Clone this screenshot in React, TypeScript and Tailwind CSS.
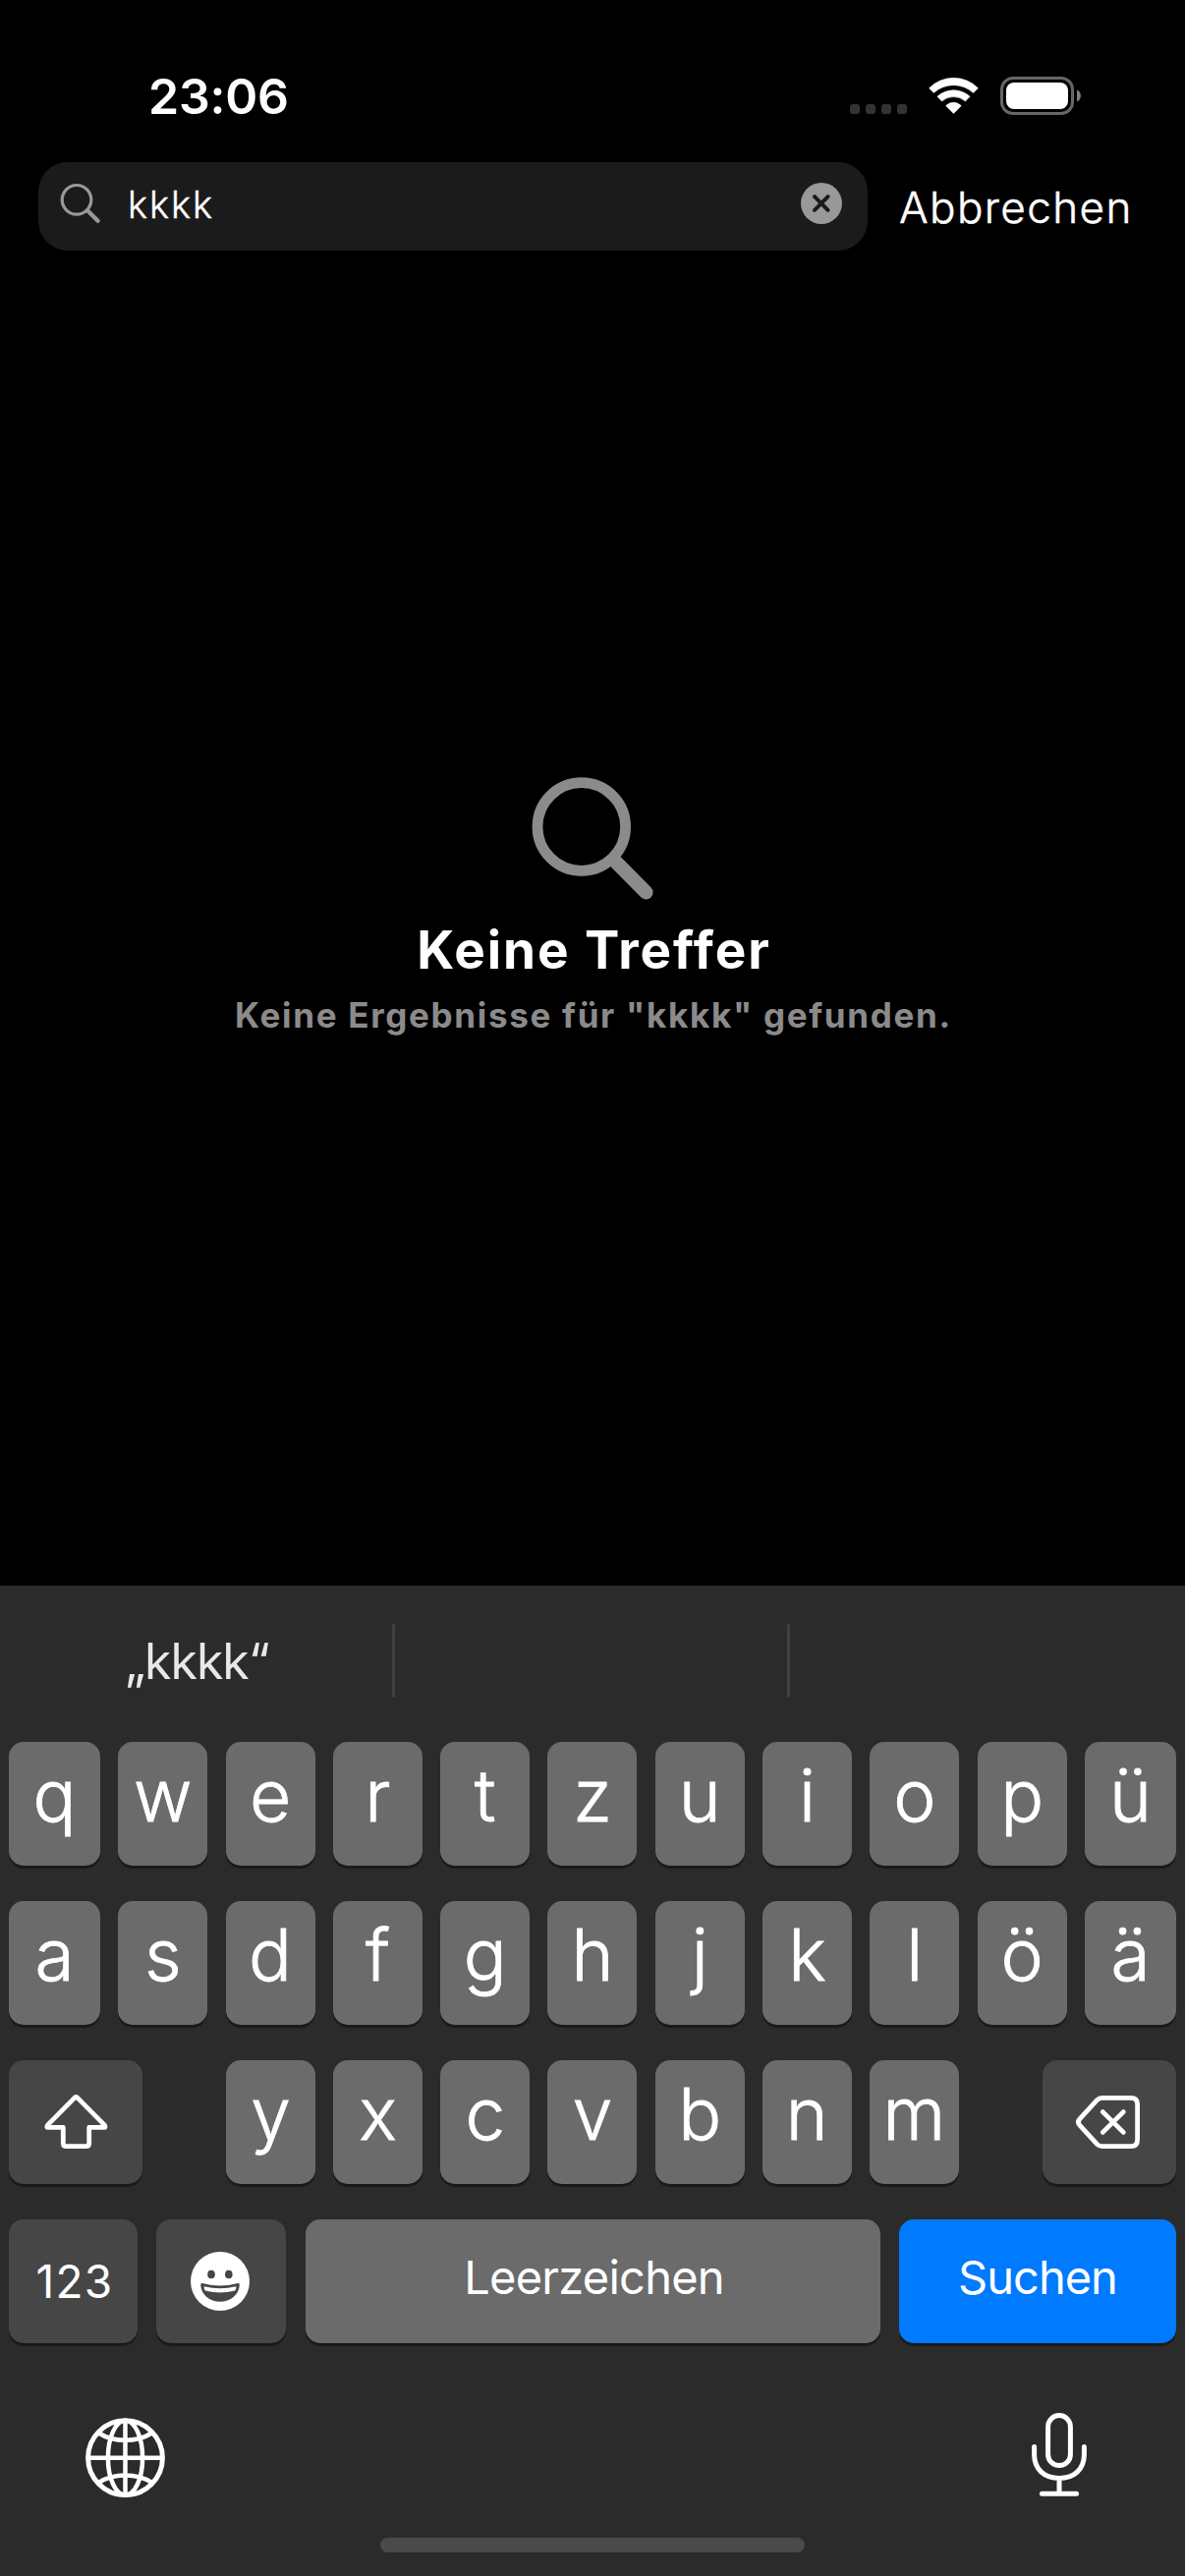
import type { ReactNode } from "react";

const rowOne = ["q", "w", "e", "r", "t", "z", "u", "i", "o", "p", "ü"];
const rowTwo = ["a", "s", "d", "f", "g", "h", "j", "k", "l", "ö", "ä"];
const rowThree = ["y", "x", "c", "v", "b", "n", "m"];

function Key({ dark, className, children }: { dark?: boolean; className: string; children: ReactNode }) {
  return (
    <div
      className={`flex h-[126px] shrink-0 items-start justify-center rounded-[15px] shadow-[0_3px_0_#1a1a1a] ${
        dark ? "bg-[#464646]" : "bg-[#6b6b6b]"
      } ${className}`}
    >
      {children}
    </div>
  );
}

function Letter({ char, wide }: { char: string; wide?: boolean }) {
  return (
    <Key className={wide ? "w-[93px]" : "w-[91px]"}>
      <span className="text-[73px] leading-[109px] font-light [-webkit-text-stroke:0.8px_white]">{char}</span>
    </Key>
  );
}

function LetterRow({ chars }: { chars: string[] }) {
  return (
    <div className="flex justify-between">
      {chars.map((c, i) => (
        <Letter key={c} char={c} wide={i === 0 || i === chars.length - 1} />
      ))}
    </div>
  );
}

function StatusBar() {
  return (
    <div className="flex h-[165px] items-start pl-[151px]">
      <span className="mt-[73px] text-[50px] leading-[50px] font-semibold tracking-[-0.2px]">23:06</span>
      <div className="mt-[78px] mr-[106px] ml-auto flex items-start">
        <div className="mt-[28px] flex gap-[6px]">
          {[0, 1, 2, 3].map((i) => (
            <div key={i} className="size-[10px] rounded-[3px] bg-[#333333]" />
          ))}
        </div>
        <svg className="mt-px ml-[22px]" width="51" height="38" viewBox="0 0 51 38" fill="#fff" stroke="#fff" strokeWidth="0.6" strokeLinejoin="round">
          <path d="M0.6 10.7A35 35 0 0 1 50.4 10.7L45.6 15.4A30 30 0 0 0 5.3 15.4Z" />
          <path d="M8.9 19.3A24.4 24.4 0 0 1 42.1 19.3L37.4 24A18.2 18.2 0 0 0 13.6 24Z" />
          <path d="M17.7 28.8A10.2 10.2 0 0 1 33.2 28.8L25.5 36.5Z" />
        </svg>
        <svg className="ml-[22px]" width="82" height="39" viewBox="0 0 82 39">
          <rect x="1.5" y="1.5" width="72" height="36" rx="11.5" fill="none" stroke="#666" strokeWidth="3" />
          <rect x="6" y="6" width="63" height="27" rx="8" fill="#fff" />
          <path d="M78 13.5C83.2 15.5 83.2 23.5 78 25.5Z" fill="#808080" />
        </svg>
      </div>
    </div>
  );
}

function SearchBar() {
  return (
    <div className="flex items-start pl-[39px]">
      <div className="flex h-[90px] w-[844px] items-start rounded-[30px] bg-[#1b1b1b] pl-[21px]">
        <svg className="mt-[20px]" width="44" height="44" viewBox="0 0 44 44" fill="none" stroke="#999" strokeLinecap="round">
          <circle cx="18" cy="18.3" r="14.8" strokeWidth="3.2" />
          <path d="M29 29.3L39.6 39.8" strokeWidth="4.4" />
        </svg>
        <span className="mt-[24px] ml-[26px] text-[38px] leading-[38px] font-light tracking-[1.9px] [-webkit-text-stroke:0.4px_white]">kkkk</span>
        <svg className="mt-[21px] mr-[26px] ml-auto" width="42" height="42" viewBox="0 0 42 42">
          <circle cx="21" cy="21" r="21" fill="#999" />
          <path d="M14 14.2L27.6 27.8M27.6 14.2L14 27.8" stroke="#1b1b1b" strokeWidth="4" strokeLinecap="round" />
        </svg>
      </div>
      <span className="mt-[24px] ml-[32px] text-[44px] leading-[44px] font-light tracking-[1.4px] [-webkit-text-stroke:0.5px_white]">
        Abbrechen
      </span>
    </div>
  );
}

function EmptyState() {
  return (
    <div className="flex flex-1 flex-col items-center pt-[535px]">
      <svg width="126" height="126" viewBox="0 0 126 126" fill="none" stroke="#8b8b8b" strokeLinecap="round">
        <circle cx="51.8" cy="51.5" r="44.8" strokeWidth="10.8" />
        <path d="M85 85.5L117.4 118.3" strokeWidth="14.4" />
      </svg>
      <h1 className="mt-[23px] pl-[3px] text-[53px] leading-[56px] font-bold tracking-[1.94px]">Keine Treffer</h1>
      <p className="mt-[18px] pl-[2px] text-[35px] leading-[40px] font-bold tracking-[1.68px] whitespace-nowrap text-[#8b8b8b]">
        Keine Ergebnisse für "kkkk" gefunden.
      </p>
    </div>
  );
}

function Keyboard() {
  return (
    <div className="h-[1008px] bg-[#2b2b2b]">
      <div className="flex h-[159px] items-start">
        <div className="w-[399px] pt-[52px] pl-[127px] text-[50px] leading-[50px] tracking-[-1px] text-[#e8e8e8]">„kkkk“</div>
        <div className="mt-[39px] h-[75px] w-[3px] rounded-full bg-[#404040]" />
        <div className="w-[399px]" />
        <div className="mt-[39px] h-[75px] w-[3px] rounded-full bg-[#404040]" />
      </div>
      <div className="flex flex-col gap-[36px] px-[9px]">
        <LetterRow chars={rowOne} />
        <LetterRow chars={rowTwo} />
        <div className="flex justify-between">
          <Key dark className="w-[136px]">
            <svg width="136" height="126" viewBox="0 0 136 126" fill="none" stroke="#fff" strokeWidth="4.8" strokeLinejoin="round">
              <path d="M66.6 38.6Q68.4 36.4 70.2 38.6L97 65.6Q99.4 68.4 96.4 68.4H81.7V84.6Q81.7 87.7 78.6 87.7H58.4Q55.3 87.7 55.3 84.6V68.4H40.4Q37.4 68.4 39.8 65.6Z" />
            </svg>
          </Key>
          <div className="flex w-[746px] justify-between">
            {rowThree.map((c) => (
              <Letter key={c} char={c} />
            ))}
          </div>
          <Key dark className="w-[136px]">
            <svg width="136" height="126" viewBox="0 0 136 126" fill="none" stroke="#fff" strokeWidth="4.8" strokeLinecap="round" strokeLinejoin="round">
              <path d="M60.5 38.4H90Q96.6 38.4 96.6 45V81Q96.6 87.6 90 87.6H60.5Q57.6 87.6 55.4 85.4L37.8 66.2Q35 63 37.8 59.8L55.4 40.6Q57.6 38.4 60.5 38.4Z" />
              <path d="M61.3 52.6L82.3 73.4M82.3 52.6L61.3 73.4" />
            </svg>
          </Key>
        </div>
        <div className="flex">
          <Key dark className="w-[131px] pl-[3px]">
            <span className="text-[46px] leading-[126px] tracking-[1.2px]">123</span>
          </Key>
          <Key dark className="ml-[19px] w-[132px]">
            <svg width="132" height="126" viewBox="0 0 132 126">
              <circle cx="65" cy="63" r="30" fill="#fff" />
              <ellipse cx="56" cy="56" rx="3.8" ry="4.3" fill="#464646" />
              <ellipse cx="73.8" cy="56" rx="3.8" ry="4.3" fill="#464646" />
              <path d="M47 65Q65 70 83 65Q85 64.6 84.8 67C84 76.5 76 83.8 65 83.8S46 76.5 45.2 67Q45 64.6 47 65Z" fill="#464646" />
              <path d="M48.8 68.3Q65 72.3 81.2 68.3Q81.8 70 80.3 72.5Q65 76.3 49.7 72.5Q48.2 70 48.8 68.3Z" fill="#fff" />
            </svg>
          </Key>
          <Key className="ml-[20px] w-[585px] pl-[2px]">
            <span className="text-[47px] leading-[118px] tracking-[-0.75px]">Leerzeichen</span>
          </Key>
          <div className="ml-[19px] flex h-[126px] w-[282px] items-start justify-center rounded-[15px] bg-[#007aff] shadow-[0_3px_0_#1a1a1a]">
            <span className="text-[47px] leading-[118px] tracking-[-1px]">Suchen</span>
          </div>
        </div>
      </div>
      <div className="flex items-start justify-between pr-[98px] pl-[86px]">
        <svg className="mt-[75px]" width="84" height="84" viewBox="0 0 84 84" fill="none" stroke="#fff" strokeWidth="4.5">
          <circle cx="41.5" cy="41.7" r="37.9" strokeWidth="5" />
          <ellipse cx="41.5" cy="41.7" rx="17.6" ry="38" />
          <path d="M41.5 4V79M4 41.7H79" />
          <path d="M14.5 16.5Q26 23.8 41.5 23.8T68.5 16.5M14.5 67Q26 59.6 41.5 59.6T68.5 67" />
        </svg>
        <svg className="mt-[70px]" width="60" height="88" viewBox="0 0 60 88" fill="none" stroke="#fff" strokeWidth="5" strokeLinecap="round">
          <rect x="18.6" y="3.6" width="22.8" height="51" rx="11.4" />
          <path d="M4.6 35.5V43.5C4.6 58.5 15 67.5 30 67.5S55.4 58.5 55.4 43.5V35.5M30 67.5V83M12.4 83.2H47.6" />
        </svg>
      </div>
      <div className="mx-auto mt-[39px] h-[15px] w-[432px] rounded-full bg-[#4a4a4a]" />
    </div>
  );
}

export default function App() {
  return (
    <div className="flex h-[2622px] w-[1206px] flex-col overflow-hidden bg-black font-['Inter',sans-serif] text-white">
      <StatusBar />
      <SearchBar />
      <EmptyState />
      <Keyboard />
    </div>
  );
}
